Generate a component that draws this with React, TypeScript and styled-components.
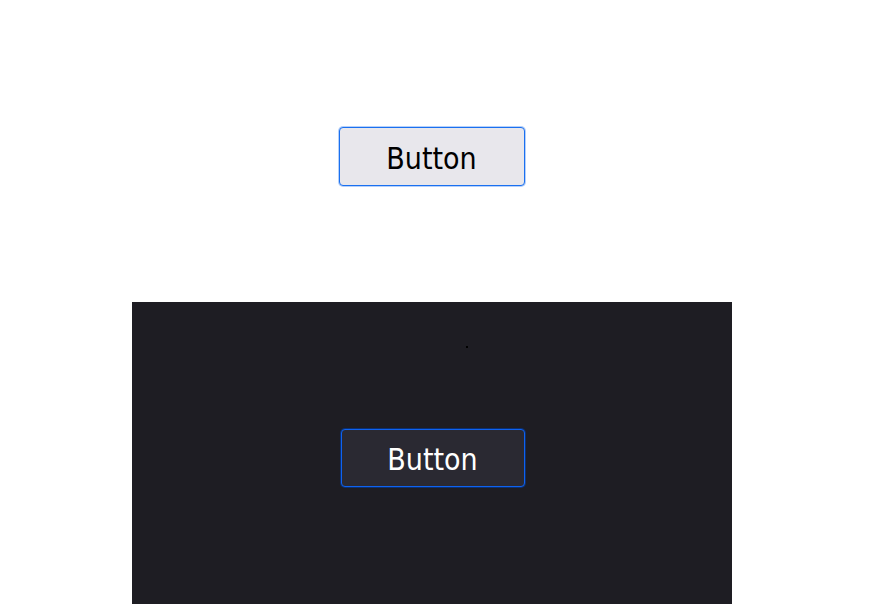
import styled, { createGlobalStyle } from "styled-components";

const GlobalStyle = createGlobalStyle`
  html, body {
    margin: 0;
    padding: 0;
    background: #fff;
  }
  body {
    font-family: "DejaVu Sans Condensed", "DejaVu Sans", sans-serif;
  }
`;

const Page = styled.div`
  width: 863px;
  display: flex;
  flex-direction: column;
  align-items: center;
`;

const LightSection = styled.section`
  width: 600px;
  height: 302px;
  display: flex;
  justify-content: center;
  padding-top: 127px;
  box-sizing: border-box;
`;

const DarkSection = styled.section`
  position: relative;
  width: 600px;
  height: 310px;
  background: #1e1d23;
  display: flex;
  justify-content: center;
  padding-top: 127px;
  padding-left: 2px;
  box-sizing: border-box;
`;

const Dot = styled.span`
  position: absolute;
  left: 334px;
  top: 44px;
  width: 2px;
  height: 2px;
  background: #000;
`;

const Button = styled.button<{ $dark?: boolean }>`
  width: ${(p) => (p.$dark ? "184px" : "186px")};
  height: ${(p) => (p.$dark ? "58px" : "59px")};
  font-family: "DejaVu Sans Condensed", "DejaVu Sans", sans-serif;
  font-stretch: condensed;
  font-size: 30px;
  line-height: 1;
  padding: 4px 0 0;
  border-radius: 4px;
  border: 1px solid ${(p) => (p.$dark ? "#0f62f0" : "#1a70f0")};
  background: ${(p) => (p.$dark ? "#2a2932" : "#e8e7ec")};
  color: ${(p) => (p.$dark ? "#fff" : "#000")};
  box-shadow: 0 0 0 1px ${(p) => (p.$dark ? "#0b2f70" : "#b5d0fa")};
  margin: 0;
  cursor: pointer;
`;

export default function App() {
  return (
    <>
      <GlobalStyle />
      <Page>
        <LightSection>
          <Button>Button</Button>
        </LightSection>
        <DarkSection>
          <Dot />
          <Button $dark>Button</Button>
        </DarkSection>
      </Page>
    </>
  );
}
